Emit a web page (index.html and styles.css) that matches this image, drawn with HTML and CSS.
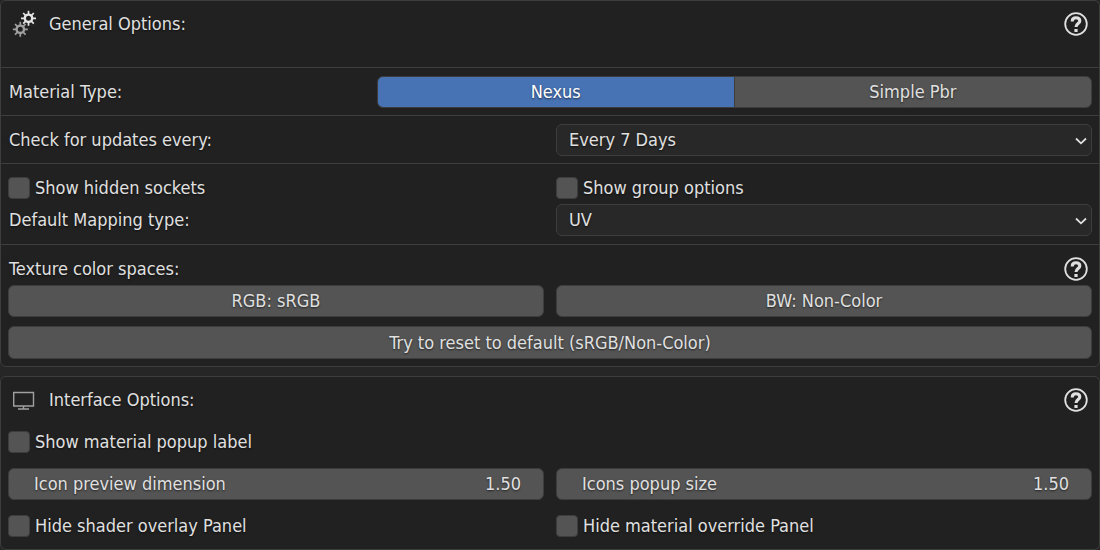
FILE: index.html
```
<!DOCTYPE html>
<html lang="en">
<head>
<meta charset="utf-8">
<title>Preferences</title>
<link rel="stylesheet" href="styles.css">
</head>
<body>
<svg class="defs" aria-hidden="true">
  <symbol id="help" viewBox="0 0 24 24">
    <circle cx="12" cy="12" r="10.8" fill="none" stroke="currentColor" stroke-width="1.8"/>
    <path d="M8.3 9.4V8.9C8.3 6.8 9.8 5.8 12 5.8s3.8 1.1 3.8 3.1c0 2.6-3.8 2.7-3.8 6" fill="none" stroke="currentColor" stroke-width="3.1"/>
    <rect x="10.4" y="17" width="3.2" height="3" fill="currentColor"/>
  </symbol>
  <symbol id="gear" viewBox="-8 -8 16 16">
    <circle r="3.7" fill="none" stroke="currentColor" stroke-width="2.4"/>
    <path d="M0-4V-7.5M0 4V7.5M-4 0H-7.5M4 0H7.5M-3-3L-5.3-5.3M3-3L5.3-5.3M-3 3L-5.3 5.3M3 3L5.3 5.3" fill="none" stroke="currentColor" stroke-width="1.7"/>
  </symbol>
  <symbol id="chevron" viewBox="0 0 12 8">
    <path d="M1 1.5L6 6.3L11 1.5" fill="none" stroke="currentColor" stroke-width="1.8"/>
  </symbol>
</svg>
<main class="panels">
  <section class="card">
    <div class="section section-head">
      <header class="row">
        <svg class="head-icon" viewBox="0 0 32 32" aria-hidden="true">
          <use class="gear-back" href="#gear" x="4.3" y="13.3" width="16" height="16"/>
          <use class="gear-front" href="#gear" x="12.5" y="2.3" width="16" height="16"/>
        </svg>
        <h2 class="title">General Options:</h2>
        <button class="help" type="button" aria-label="Help"><svg class="help-icon"><use href="#help"/></svg></button>
      </header>
    </div>
    <div class="section">
      <div class="row material">
        <span class="label" id="material">Material Type:</span>
        <div class="segmented" role="group" aria-labelledby="material">
          <button class="segment active" type="button" aria-pressed="true">Nexus</button>
          <button class="segment" type="button" aria-pressed="false">Simple Pbr</button>
        </div>
      </div>
    </div>
    <div class="section">
      <div class="columns">
        <label class="label" for="updates">Check for updates every:</label>
        <div class="dropdown">
          <select class="select" id="updates"><option>Every 7 Days</option></select>
          <svg class="chevron" aria-hidden="true"><use href="#chevron"/></svg>
        </div>
      </div>
    </div>
    <div class="section section-end">
      <div class="columns">
        <label class="check"><input class="box" type="checkbox">Show hidden sockets</label>
        <label class="check"><input class="box" type="checkbox">Show group options</label>
        <label class="label" for="mapping">Default Mapping type:</label>
        <div class="dropdown">
          <select class="select" id="mapping"><option>UV</option></select>
          <svg class="chevron" aria-hidden="true"><use href="#chevron"/></svg>
        </div>
      </div>
    </div>
    <div class="section">
      <div class="row">
        <span class="label grow">Texture color spaces:</span>
        <button class="help" type="button" aria-label="Help"><svg class="help-icon"><use href="#help"/></svg></button>
      </div>
      <div class="columns">
        <button class="button" type="button">RGB: sRGB</button>
        <button class="button" type="button">BW: Non-Color</button>
      </div>
      <button class="button reset" type="button">Try to reset to default (sRGB/Non-Color)</button>
    </div>
  </section>

  <section class="card interface">
    <header class="row">
      <svg class="head-icon" viewBox="0 0 32 32" aria-hidden="true">
        <path class="monitor" d="M5.7 8.5H25.5V22H5.7ZM15.5 22V24.5M10 25H21"/>
      </svg>
      <h2 class="title">Interface Options:</h2>
      <button class="help" type="button" aria-label="Help"><svg class="help-icon"><use href="#help"/></svg></button>
    </header>
    <label class="check"><input class="box" type="checkbox">Show material popup label</label>
    <div class="columns">
      <label class="field">Icon preview dimension<input class="value" type="text" inputmode="decimal" value="1.50"></label>
      <label class="field">Icons popup size<input class="value" type="text" inputmode="decimal" value="1.50"></label>
    </div>
    <div class="columns">
      <label class="check"><input class="box" type="checkbox">Hide shader overlay Panel</label>
      <label class="check"><input class="box" type="checkbox">Hide material override Panel</label>
    </div>
  </section>
</main>
</body>
</html>
```
FILE: styles.css
```
* {
  box-sizing: border-box;
}

body {
  margin: 0;
  background: #262626;
  color: #e0e0e0;
  font: 18px/32px "DejaVu Sans Condensed", "DejaVu Sans", sans-serif;
  text-shadow: 0 1px 2px rgba(0, 0, 0, 0.6);
}

button,
input,
select {
  margin: 0;
  padding: 0;
  color: inherit;
  font: inherit;
  text-shadow: inherit;
}

.defs {
  display: none;
}

.panels {
  display: flex;
  flex-direction: column;
  gap: 9px;
}

.card {
  border: 1px solid #3d3d3d;
  border-radius: 6px;
  background: #212121;
}

.section {
  padding: 8px 7px 7px;
}

.section + .section {
  border-top: 1px solid #3d3d3d;
}

.section-head {
  padding: 7px 7px 27px;
}

.section-end {
  padding-bottom: 8px;
}

.interface {
  display: flex;
  flex-direction: column;
  gap: 10px;
  padding: 7px;
}

.row {
  display: flex;
  align-items: center;
}

.columns {
  display: grid;
  grid-template-columns: 1fr 1fr;
  column-gap: 12px;
}

.label {
  padding-left: 1px;
}

.title,
.grow {
  flex: 1;
}

.title {
  margin: 0 0 0 9px;
  font: inherit;
}

.head-icon {
  width: 32px;
  height: 32px;
}

.gear-back {
  color: #a0a0a0;
}

.gear-front {
  color: #e6e6e6;
}

.monitor {
  fill: none;
  stroke: #a0a0a0;
  stroke-width: 1.4;
}

.help {
  display: flex;
  align-items: center;
  justify-content: center;
  width: 32px;
  height: 32px;
  border: 0;
  background: none;
}

.help-icon {
  width: 24px;
  height: 24px;
}

.material {
  display: grid;
  grid-template-columns: 34fr 66fr;
}

.segmented {
  display: grid;
  grid-template-columns: 1fr 1fr;
  gap: 1px;
  height: 32px;
  overflow: hidden;
  border: 1px solid #3d3d3d;
  border-radius: 6px;
  background: #3d3d3d;
}

.segment {
  border: 0;
  background: #545454;
  line-height: 30px;
}

.segment.active {
  background: #4772b3;
  color: #ffffff;
}

.dropdown {
  display: grid;
  align-items: center;
}

.select,
.chevron {
  grid-area: 1 / 1;
}

.select {
  appearance: none;
  width: 100%;
  height: 32px;
  padding: 0 30px 0 12px;
  border: 1px solid #3d3d3d;
  border-radius: 6px;
  background: #282828;
  line-height: 30px;
}

.chevron {
  justify-self: end;
  width: 12px;
  height: 8px;
  margin: 2px 5px 0 0;
  pointer-events: none;
}

.check {
  display: flex;
  align-items: center;
  gap: 5px;
}

.box {
  appearance: none;
  width: 22px;
  height: 22px;
  border: 1px solid #3d3d3d;
  border-radius: 4px;
  background: #545454;
}

.button,
.field {
  height: 32px;
  border: 1px solid #3d3d3d;
  border-radius: 6px;
  background: #545454;
  line-height: 30px;
}

.button.reset {
  display: block;
  width: 100%;
  height: 33px;
  margin-top: 9px;
}

.field {
  display: flex;
  padding: 0 22px 0 25px;
}

.value {
  flex: 1;
  min-width: 0;
  border: 0;
  background: none;
  text-align: right;
}
```
